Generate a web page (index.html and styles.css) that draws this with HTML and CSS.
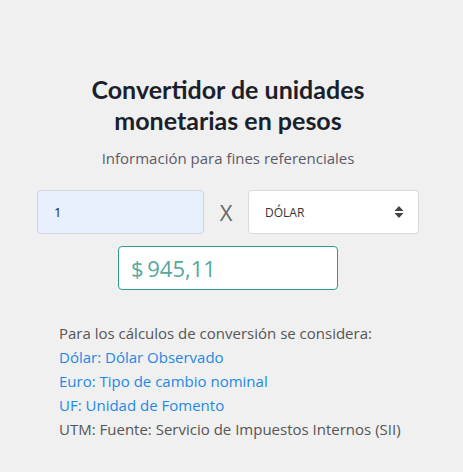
FILE: index.html
```html
<!DOCTYPE html>
<html lang="es">
<head>
  <meta charset="UTF-8" />
  <title>Convertidor de unidades monetarias</title>
  <link rel="stylesheet" href="styles.css">
</head>
<body>
  <main class="converter">
    <h1 class="title">Convertidor de unidades monetarias en pesos</h1>
    <p class="subtitle">Información para fines referenciales</p>

    <div class="row">
      <input class="amount" type="text" value="1" />
      <span class="times">X</span>
      <div class="select">
        <span>DÓLAR</span>
        <svg width="10" height="14" viewBox="0 0 10 14">
          <path d="M5 1 L9.5 6 H0.5 Z" fill="#444" />
          <path d="M5 13 L9.5 8 H0.5 Z" fill="#444" />
        </svg>
      </div>
    </div>

    <div class="result">$&thinsp;945,11</div>

    <div class="info">
      <p>Para los cálculos de conversión se considera:</p>
      <a href="#">Dólar: Dólar Observado</a>
      <a href="#">Euro: Tipo de cambio nominal</a>
      <a href="#">UF: Unidad de Fomento</a>
      <p>UTM: Fuente: Servicio de Impuestos Internos (SII)</p>
    </div>
  </main>
</body>
</html>
```

FILE: styles.css
```css
body {
  margin: 0;
  background-color: #f0f0f0;
  font-family: "Open Sans", sans-serif;
  color: #555;
}

.converter {
  width: 382px;
  margin-left: 37px;
  padding-top: 74px;
  display: flex;
  flex-direction: column;
  align-items: center;
}

.title {
  margin: 0;
  width: 320px;
  font-family: Lato, sans-serif;
  font-size: 25px;
  font-weight: bold;
  line-height: 31px;
  text-align: center;
  color: #1a1f2b;
}

.subtitle {
  margin: 12px 0 0;
  font-size: 15px;
  line-height: 20px;
  color: #5c5a6a;
}

.row {
  margin-top: 22px;
  width: 100%;
  display: flex;
  align-items: center;
}

.amount {
  box-sizing: border-box;
  width: 167px;
  height: 44px;
  padding: 0 16px;
  border: 1px solid #d0d4da;
  border-radius: 4px;
  background-color: #e8f0fe;
  font-family: "Open Sans", sans-serif;
  font-size: 13px;
  color: #222;
}

.times {
  width: 44px;
  text-align: center;
  font-size: 22px;
  color: #666;
}

.select {
  box-sizing: border-box;
  flex: 1;
  height: 44px;
  padding: 0 14px 0 16px;
  border: 1px solid #d6d9de;
  border-radius: 4px;
  background-color: #fff;
  display: flex;
  align-items: center;
  justify-content: space-between;
  font-size: 12px;
  color: #333;
}

.result {
  box-sizing: border-box;
  margin-top: 12px;
  width: 220px;
  height: 44px;
  padding: 0 12px;
  border: 1px solid #2a9d8f;
  border-radius: 4px;
  background-color: #fff;
  display: flex;
  align-items: center;
  font-size: 22px;
  color: #55a89c;
}

.info {
  margin-top: 31px;
  width: 100%;
  padding-left: 22px;
  box-sizing: border-box;
  display: flex;
  flex-direction: column;
  font-size: 15px;
  line-height: 24px;
}

.info p {
  margin: 0;
}

.info a {
  color: #1e88e5;
  text-decoration: none;
}
```
